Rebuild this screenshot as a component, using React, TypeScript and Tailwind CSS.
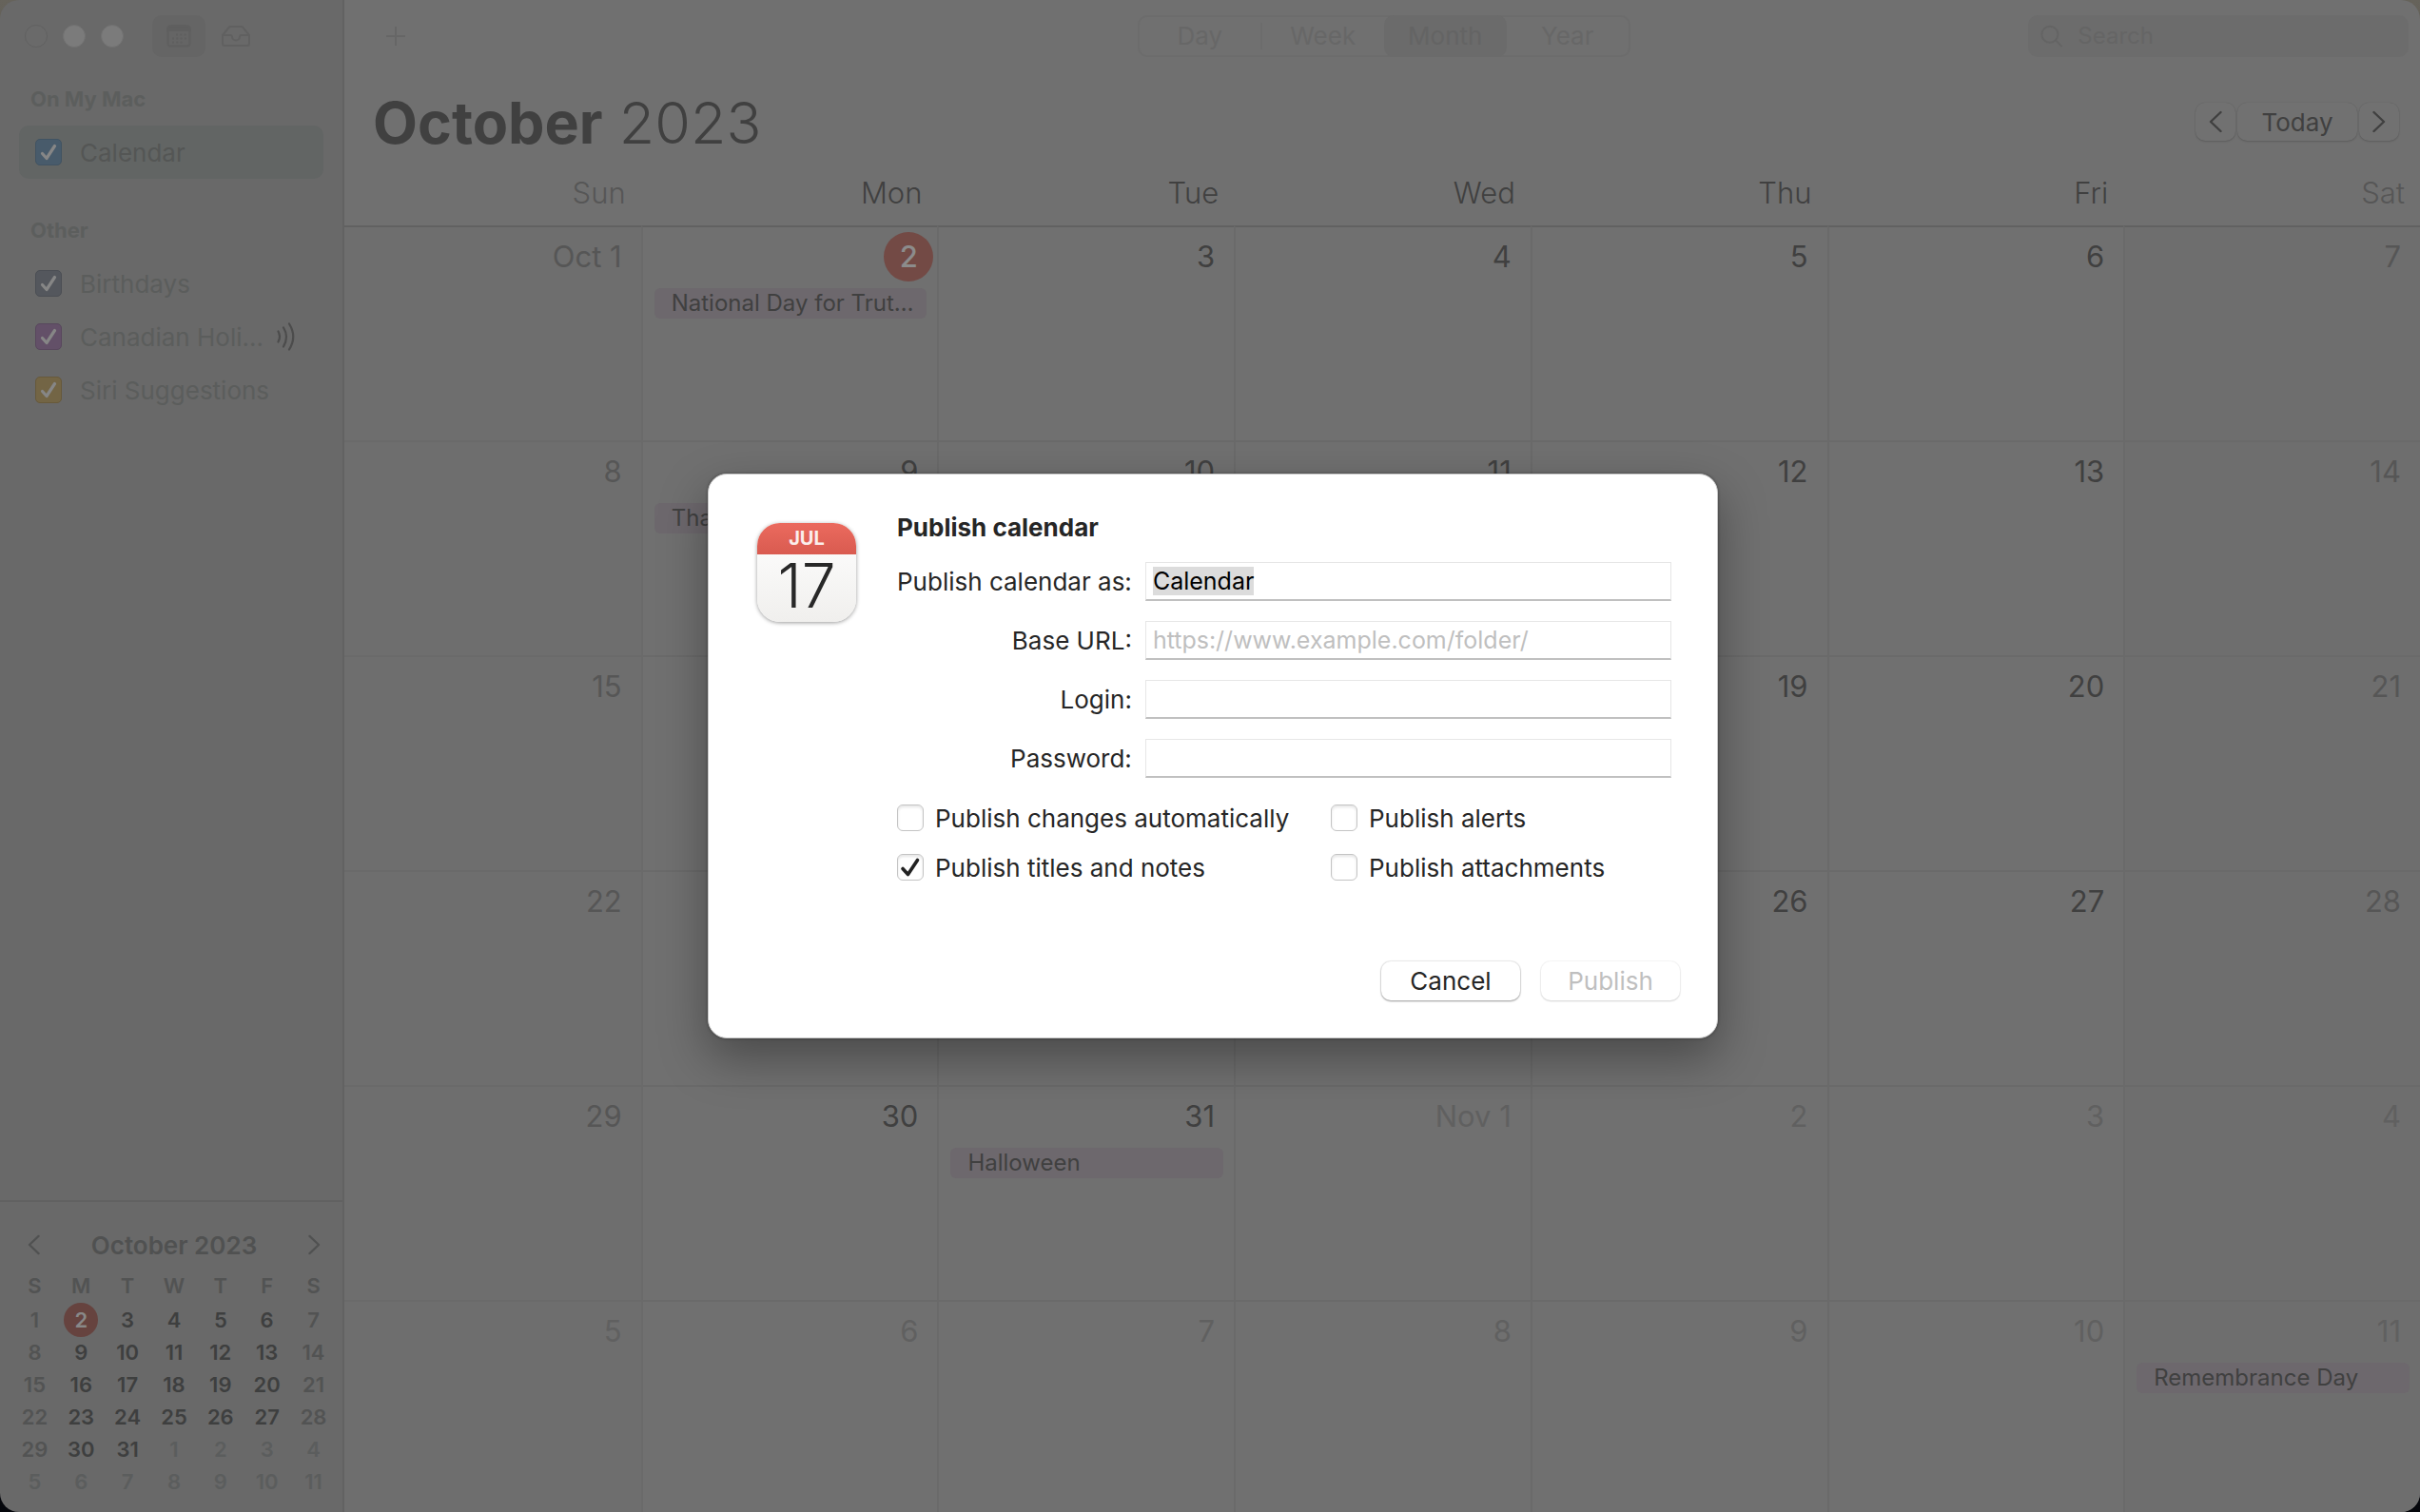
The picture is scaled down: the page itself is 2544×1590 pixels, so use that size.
import { useEffect, useRef } from "react"

const weekdays = ["Sun", "Mon", "Tue", "Wed", "Thu", "Fri", "Sat"]

const weeks = [
  ["Oct 1", "2", "3", "4", "5", "6", "7"],
  ["8", "9", "10", "11", "12", "13", "14"],
  ["15", "16", "17", "18", "19", "20", "21"],
  ["22", "23", "24", "25", "26", "27", "28"],
  ["29", "30", "31", "Nov 1", "2", "3", "4"],
  ["5", "6", "7", "8", "9", "10", "11"],
]

const events: Record<string, string> = {
  "0-1": "National Day for Trut…",
  "1-1": "Thanksgiving",
  "4-2": "Halloween",
  "5-6": "Remembrance Day",
}

const otherCalendars = [
  { name: "Birthdays", color: "bg-[#54575d] border-[#4b4e54]", shared: false },
  { name: "Canadian Holi…", color: "bg-[#635068] border-[#58475d]", shared: true },
  { name: "Siri Suggestions", color: "bg-[#736545] border-[#67593b]", shared: false },
]

const isWeekend = (col: number) => col === 0 || col === 6
const isNextMonth = (row: number, col: number) => row === 5 || (row === 4 && col > 2)
const isToday = (row: number, col: number) => row === 0 && col === 1

function Chevron({ direction, className }: { direction: "left" | "right"; className?: string }) {
  return (
    <svg viewBox="0 0 14 24" className={className} fill="none" stroke="currentColor" strokeWidth="2.4" strokeLinecap="round" strokeLinejoin="round">
      <path d={direction === "left" ? "M12.5 2 2 12l10.500 10" : "M1.500 2 12 12 1.500 22"} />
    </svg>
  )
}

function SidebarItem({ name, color, shared, selected }: { name: string; color: string; shared?: boolean; selected?: boolean }) {
  return (
    <label className={`flex h-14 items-center rounded-[10px] pl-[17px] text-[26px] ${selected ? "bg-[#626564] text-[#545655]" : "text-[#5b5d5c]"}`}>
      <span className="grid size-7 shrink-0 place-items-center">
        <input type="checkbox" defaultChecked className={`col-start-1 row-start-1 size-7 appearance-none rounded-[5px] border ${color}`} />
        <svg viewBox="0 0 28 28" className="pointer-events-none col-start-1 row-start-1 size-7" fill="none" stroke="#868686" strokeWidth="3.200" strokeLinecap="round" strokeLinejoin="round">
          <path d="M7.500 15.500 12 20.500 20.500 7.500" />
        </svg>
      </span>
      <span className="ml-[19px] whitespace-nowrap">{name}</span>
      {shared && (
        <svg viewBox="0 0 22 30" className="ml-auto mr-7 h-[30px] w-[22px] text-[#4c4c4c]" fill="none" stroke="currentColor" strokeWidth="2.200" strokeLinecap="round">
          <path d="M2.500 9.500Q5.500 15 2.500 20.500M8 5.500Q14 15 8 25.500M14 1.500Q22.500 15 14 28.500" />
        </svg>
      )}
    </label>
  )
}

function MiniCalendar() {
  return (
    <div className="border-t-2 border-[#616161] pb-[15px] pl-3 pr-[6px] pt-[25px] font-semibold">
      <div className="flex h-10 items-center justify-between px-[17px] text-[#505151]">
        <button aria-label="Previous month">
          <Chevron direction="left" className="h-[22px] w-[13px]" />
        </button>
        <h2 className="text-[26px]">October 2023</h2>
        <button aria-label="Next month">
          <Chevron direction="right" className="h-[22px] w-[13px]" />
        </button>
      </div>
      <table className="mt-[6px] w-full table-fixed text-center text-[22px] leading-[34px]">
        <thead>
          <tr className="h-9 text-[#525353]">
            {weekdays.map((day) => (
              <th key={day} className="p-0 align-top font-semibold">{day[0]}</th>
            ))}
          </tr>
        </thead>
        <tbody>
          {weeks.map((week, row) => (
            <tr key={row} className="h-[34px]">
              {week.map((day, col) => {
                const label = day.replace(/\D/g, "")
                if (isToday(row, col)) {
                  return (
                    <td key={col} className="p-0">
                      <span className="-my-px mx-auto block size-9 rounded-full bg-[#66433f] leading-9 text-[#888]">{label}</span>
                    </td>
                  )
                }
                const color = isNextMonth(row, col) ? "text-[#5b5d5d]" : isWeekend(col) ? "text-[#525353]" : "text-[#3e3f3f]"
                return (
                  <td key={col} className={`p-0 ${color}`}>{label}</td>
                )
              })}
            </tr>
          ))}
        </tbody>
      </table>
    </div>
  )
}

function Sidebar() {
  return (
    <aside className="flex w-[362px] shrink-0 flex-col border-r-2 border-[#626262] bg-[#696969]">
      <div className="flex h-[76px] items-center pl-[26px]">
        <div className="flex gap-4">
          <button aria-label="Close" className="size-6 rounded-full border border-[#616161] bg-[#6a6a6a]" />
          <button aria-label="Minimize" className="size-6 rounded-full border border-[#727272] bg-[#7b7b7b]" />
          <button aria-label="Zoom" className="size-6 rounded-full border border-[#727272] bg-[#7b7b7b]" />
        </div>
        <button aria-label="Calendars" className="ml-[30px] flex h-11 w-14 items-center justify-center rounded-[10px] bg-[#656565] text-[#5f5f5f]">
          <svg viewBox="0 0 26 24" className="h-6 w-[26px]" fill="none" stroke="currentColor" strokeWidth="2">
            <rect x="1.500" y="1.500" width="23" height="21" rx="3" />
            <path d="M1.500 4.500A3 3 0 0 1 4.500 1.500h17a3 3 0 0 1 3 3V6h-23z" fill="currentColor" />
            <path d="M10 10.500h11M6 14.500h15M6 18.500h11" strokeDasharray="2 2.300" />
          </svg>
        </button>
        <button aria-label="Inbox" className="ml-4 text-[#606060]">
          <svg viewBox="0 0 32 24" className="h-6 w-8" fill="none" stroke="currentColor" strokeWidth="2" strokeLinejoin="round">
            <path d="M2 11 8.500 3Q9.300 2 10.500 2h11q1.200 0 2 1L30 11v8.500a2.500 2.500 0 0 1-2.500 2.500h-23A2.500 2.500 0 0 1 2 19.500zM2 11h8.500q1.200 0 1.500 1.500a4 4 0 0 0 8 0q.3-1.500 1.500-1.500H30" />
          </svg>
        </button>
      </div>
      <nav className="flex-1 px-5 pt-3">
        <h2 className="pl-3 text-[22px] font-bold leading-8 text-[#5c5e5d]">On My Mac</h2>
        <div className="mt-3">
          <SidebarItem name="Calendar" color="bg-[#485b6b] border-[#415362]" selected />
        </div>
        <h2 className="mt-[38px] pl-3 text-[22px] font-bold leading-8 text-[#5c5e5d]">Other</h2>
        <div className="mt-3">
          {otherCalendars.map((calendar) => (
            <SidebarItem key={calendar.name} {...calendar} />
          ))}
        </div>
      </nav>
      <MiniCalendar />
    </aside>
  )
}

function Toolbar() {
  return (
    <header className="grid h-[76px] shrink-0 grid-cols-[1fr_auto_1fr] items-center pl-11 pr-3 text-[26px] text-[#676767]">
      <button aria-label="Add event" className="justify-self-start">
        <svg viewBox="0 0 20 20" className="size-5" stroke="#666666" strokeWidth="2">
          <path d="M10 0v20M0 10h20" />
        </svg>
      </button>
      <div className="mr-7 grid h-11 w-[518px] grid-cols-4 rounded-[10px] border-2 border-[#6c6c6c] leading-7">
        <button className="my-[6px] border-r-2 border-[#6c6c6c]">Day</button>
        <button>Week</button>
        <button className="-my-0.5 rounded-[10px] bg-[#6b6b6b] text-[#646464]">Month</button>
        <button>Year</button>
      </div>
      <label className="flex h-11 w-[400px] items-center justify-self-end rounded-[10px] bg-[#6c6c6c] pl-[13px] text-2xl">
        <svg viewBox="0 0 26 26" className="size-[26px]" fill="none" stroke="#646464" strokeWidth="2.200" strokeLinecap="round">
          <circle cx="11" cy="11" r="9.500" />
          <path d="m18 18 6.500 6.500" />
        </svg>
        <input type="search" placeholder="Search" aria-label="Search" className="ml-4 w-full min-w-0 bg-transparent outline-none placeholder:text-[#656565]" />
      </label>
    </header>
  )
}

function MonthView() {
  const navButton = "flex h-10 items-center justify-center rounded-[10px] bg-[#717171] shadow-[0_1px_2px_rgba(0,0,0,0.16),0_0_1px_rgba(0,0,0,0.14)]"

  return (
    <main className="flex min-w-0 flex-1 flex-col bg-[#707070] text-[#404040]">
      <Toolbar />
      <div className="flex h-[104px] shrink-0 items-center justify-between pl-[30px] pr-[22px] pt-1">
        <h1 className="text-[61px] font-light">
          <strong className="font-bold">October</strong> 2023
        </h1>
        <div className="mb-1 flex gap-0.5">
          <button aria-label="Previous month" className={`${navButton} w-[42px]`}>
            <Chevron direction="left" className="h-6 w-[14px]" />
          </button>
          <button className={`${navButton} w-[126px] text-[26px]`}>Today</button>
          <button aria-label="Next month" className={`${navButton} w-[42px]`}>
            <Chevron direction="right" className="h-6 w-[14px]" />
          </button>
        </div>
      </div>
      <table className="w-full table-fixed border-separate border-spacing-0">
        <thead>
          <tr className="h-14">
            {weekdays.map((day, col) => (
              <th key={day} className={`p-0 pb-[10px] pr-4 text-right text-[31px] font-light ${isWeekend(col) ? "text-[#565656]" : ""}`}>{day}</th>
            ))}
          </tr>
        </thead>
        <tbody>
          {weeks.map((week, row) => (
            <tr key={row} className="h-[226px]">
              {week.map((day, col) => {
                const event = events[`${row}-${col}`]
                const color = isNextMonth(row, col) ? "text-[#606060]" : isWeekend(col) ? "text-[#565656]" : "text-[#404040]"
                return (
                  <td
                    key={col}
                    className={`border-t-2 p-0 align-top ${row === 0 ? "border-t-[#616161]" : "border-t-[#6a6a6a]"} ${col > 0 ? "border-l-2 border-l-[#6a6a6a]" : ""} ${isWeekend(col) ? "bg-[#6e6e6e]" : ""}`}
                  >
                    <div className={`flex h-16 items-start justify-end pr-1 pt-[5px] text-[31px] leading-[52px] ${color}`}>
                      {isToday(row, col) ? (
                        <span className="size-[52px] rounded-full bg-[#734a45] text-center font-medium text-[#8c8c8c]">{day}</span>
                      ) : (
                        <span className="pr-4">{day}</span>
                      )}
                    </div>
                    {event && (
                      <div className="ml-3 mr-[11px] h-8 overflow-hidden whitespace-nowrap rounded-md bg-[#6d686d] pl-[18px] text-2xl leading-8 text-[#404040]">{event}</div>
                    )}
                  </td>
                )
              })}
            </tr>
          ))}
        </tbody>
      </table>
    </main>
  )
}

function CalendarIcon() {
  return (
    <div className="flex size-[104px] shrink-0 flex-col overflow-hidden rounded-3xl bg-linear-to-b from-white to-[#f0efed] text-center shadow-[0_1px_4px_rgba(0,0,0,0.4)]">
      <div className="bg-linear-to-b from-[#eb6a5e] to-[#d95b50] text-xl font-bold leading-[33px] text-[#fbeeec]">JUL</div>
      <div className="text-[64px] font-light leading-[66px] text-[#282828]">17</div>
    </div>
  )
}

function Option({ label, checked }: { label: string; checked?: boolean }) {
  return (
    <label className="flex h-[52px] items-center gap-3 whitespace-nowrap">
      <span className="grid size-7 shrink-0">
        <input
          type="checkbox"
          defaultChecked={checked}
          className="peer col-start-1 row-start-1 size-7 appearance-none rounded-md border border-[#c4c4c4] bg-white shadow-[inset_0_2px_3px_rgba(0,0,0,0.1)]"
        />
        <svg viewBox="0 0 28 28" className="pointer-events-none invisible col-start-1 row-start-1 size-7 peer-checked:visible" fill="none" stroke="#222" strokeWidth="3.600" strokeLinecap="round" strokeLinejoin="round">
          <path d="M6 15.500 11.500 21.500 21.500 6.500" />
        </svg>
      </span>
      {label}
    </label>
  )
}

function PublishDialog() {
  const nameField = useRef<HTMLInputElement>(null)

  useEffect(() => {
    nameField.current?.focus()
    nameField.current?.select()
  }, [])

  const field = "h-[41px] w-full min-w-0 border border-b-2 border-[#e6e6e6] border-b-[#c0c0c0] bg-white px-[7px] text-[25px] leading-8 text-black outline-none selection:bg-[#dcdcdc] selection:text-black placeholder:text-[#bfbfbf]"
  const button = "h-[41px] w-[146px] rounded-[10px] bg-white"

  return (
    <form
      role="dialog"
      aria-labelledby="publish-title"
      className="w-full max-w-[1062px] rounded-[20px] border border-[#c8c8c8] bg-white pb-[39px] pl-[51px] pr-[39px] pt-[38px] text-[26px] text-[#262626] shadow-[0_0_3px_rgba(0,0,0,0.4),0_20px_50px_rgba(0,0,0,0.35)]"
    >
      <div className="flex gap-[43px] pr-[9px]">
        <div className="pt-[13px]">
          <CalendarIcon />
        </div>
        <div className="min-w-0 flex-1">
          <h2 id="publish-title" className="leading-9 font-bold">Publish calendar</h2>
          <div className="mt-[18px] grid grid-cols-[auto_1fr] items-center gap-x-[14px] gap-y-[21px] whitespace-nowrap">
            <label htmlFor="publish-name" className="text-right">Publish calendar as:</label>
            <input ref={nameField} id="publish-name" type="text" defaultValue="Calendar" className={field} />
            <label htmlFor="base-url" className="text-right">Base URL:</label>
            <input id="base-url" type="url" placeholder="https://www.example.com/folder/" className={field} />
            <label htmlFor="login" className="text-right">Login:</label>
            <input id="login" type="text" className={field} />
            <label htmlFor="password" className="text-right">Password:</label>
            <input id="password" type="password" className={field} />
          </div>
          <div className="mt-4 grid grid-cols-[456px_1fr]">
            <Option label="Publish changes automatically" />
            <Option label="Publish alerts" />
            <Option label="Publish titles and notes" checked />
            <Option label="Publish attachments" />
          </div>
        </div>
      </div>
      <div className="mt-[73px] flex justify-end gap-[22px]">
        <button type="button" className={`${button} shadow-[0_1px_2px_rgba(0,0,0,0.35),0_0_1px_1px_rgba(0,0,0,0.08)]`}>Cancel</button>
        <button type="submit" disabled className={`${button} text-[#bfbfbf] shadow-[0_1px_2px_rgba(0,0,0,0.14),0_0_1px_1px_rgba(0,0,0,0.04)]`}>Publish</button>
      </div>
    </form>
  )
}

export default function App() {
  return (
    <div className="relative h-screen overflow-hidden bg-linear-to-b from-[#66635b] to-[#05070c] font-[Inter,sans-serif]">
      <div className="flex h-full overflow-hidden rounded-[20px]">
        <Sidebar />
        <MonthView />
      </div>
      <div className="absolute inset-0 flex items-center justify-center pl-[6px]">
        <PublishDialog />
      </div>
    </div>
  )
}
